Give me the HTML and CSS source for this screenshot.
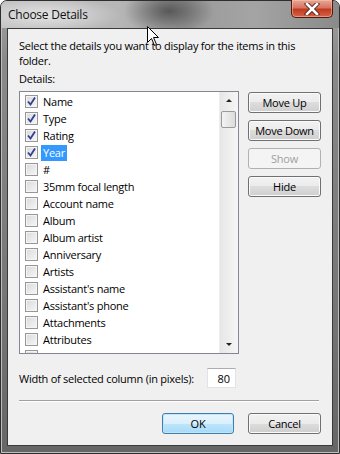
FILE: index.html
```html
<!DOCTYPE html>
<html lang="en">
<head>
    <meta charset="UTF-8">
    <meta name="viewport" content="width=device-width, initial-scale=1.0">
    <title>Choose Details</title>
    <link rel="stylesheet" href="styles.css">
</head>
<body>
    <div class="window">
        <div class="titlebar">
            <span class="title">Choose Details</span>
            <button class="close" title="Close">
                <svg width="16" height="12" viewBox="0 0 16 12">
                    <path d="M3 1 L13 11 M13 1 L3 11" stroke="#4a2218" stroke-width="4.4" stroke-linecap="square"/>
                    <path d="M3 1 L13 11 M13 1 L3 11" stroke="#fff" stroke-width="2.6" stroke-linecap="square"/>
                </svg>
            </button>
        </div>

        <div class="client">
            <p class="intro">Select the details you want to display for the items in this<br>folder.</p>
            <p class="field-label">Details:</p>

            <div class="middle">
                <div class="listbox">
                    <ul class="items">
                        <li><span class="check on"></span><span class="text">Name</span></li>
                        <li><span class="check on"></span><span class="text">Type</span></li>
                        <li><span class="check on"></span><span class="text">Rating</span></li>
                        <li><span class="check on"></span><span class="text selected">Year</span></li>
                        <li><span class="check"></span><span class="text">#</span></li>
                        <li><span class="check"></span><span class="text">35mm focal length</span></li>
                        <li><span class="check"></span><span class="text">Account name</span></li>
                        <li><span class="check"></span><span class="text">Album</span></li>
                        <li><span class="check"></span><span class="text">Album artist</span></li>
                        <li><span class="check"></span><span class="text">Anniversary</span></li>
                        <li><span class="check"></span><span class="text">Artists</span></li>
                        <li><span class="check"></span><span class="text">Assistant's name</span></li>
                        <li><span class="check"></span><span class="text">Assistant's phone</span></li>
                        <li><span class="check"></span><span class="text">Attachments</span></li>
                        <li><span class="check"></span><span class="text">Attributes</span></li>
                        <li><span class="check"></span></li>
                    </ul>
                    <div class="scrollbar">
                        <span class="arrow up"></span>
                        <span class="thumb"></span>
                        <span class="track"></span>
                        <span class="arrow down"></span>
                    </div>
                </div>

                <div class="side-buttons">
                    <button class="btn">Move Up</button>
                    <button class="btn">Move Down</button>
                    <button class="btn" disabled>Show</button>
                    <button class="btn">Hide</button>
                </div>
            </div>

            <div class="width-row">
                <label for="col-width">Width of selected column (in pixels):</label>
                <input type="text" id="col-width" value="80">
            </div>

            <hr class="separator">

            <div class="actions">
                <button class="btn default">OK</button>
                <button class="btn">Cancel</button>
            </div>
        </div>

        <svg class="cursor" width="13" height="21" viewBox="0 0 13 21">
            <path d="M0.5 0.5 L0.5 16.5 L4.5 12.5 L7.5 19.5 L9.5 18.5 L6.5 11.5 L11.5 11.5 Z" fill="#fff" stroke="#000" stroke-width="1"/>
        </svg>
    </div>
</body>
</html>
```

FILE: styles.css
```css
body {
    margin: 0;
    font-family: "Open Sans", "Liberation Sans", sans-serif;
    font-size: 11px;
    letter-spacing: -0.25px;
    color: #000;
    background: #fff;
}
.window {
    position: relative;
    width: 340px;
    height: 454px;
    box-sizing: border-box;
    border: 1px solid #2e2e2e;
    border-radius: 7px 7px 0 0;
    padding: 0 6px 7px 6px;
    background: linear-gradient(to bottom, #a3a3a3 0, #8a8a8a 60px, #767676 300px, #666 100%);
    box-shadow: inset 0 0 0 1px #bdbdbd;
}
.titlebar {
    display: flex;
    justify-content: space-between;
    align-items: flex-start;
    height: 27px;
    margin: 0 -6px;
    padding: 0 6px;
    border-radius: 6px 6px 0 0;
    background:
        radial-gradient(ellipse 45px 24px at 168px 10px, rgba(70, 70, 70, 0.8), rgba(70, 70, 70, 0) 100%),
        radial-gradient(ellipse 75px 18px at 45px 14px, rgba(232, 232, 232, 0.9), rgba(232, 232, 232, 0) 100%),
        linear-gradient(to right, #c0c0c0 0, #b6b6b6 35%, #9a9a9a 55%, #a4a4a4 75%, #8a8a8a 100%);
}
.title {
    padding: 6px 0 0 1px;
    font-size: 12px;
    line-height: 16px;
    color: #111;
}
.close {
    display: flex;
    align-items: center;
    justify-content: center;
    width: 42px;
    height: 18px;
    margin-top: -1px;
    padding: 0;
    border: 1px solid #4e1a10;
    border-top: none;
    border-radius: 0 0 5px 5px;
    background: linear-gradient(to bottom, #e9a797 0, #d7755f 45%, #c13a1f 55%, #d4634a 100%);
    box-shadow: inset 0 0 0 1px rgba(255, 200, 180, 0.5);
}
.client {
    height: 418px;
    box-sizing: border-box;
    border: 1px solid #3a3a3a;
    background: #f0f0f0;
    padding: 9px 11px 0 11px;
}
.intro, .field-label {
    margin: 0;
    line-height: 15px;
}
.field-label {
    margin: 3px 0 5px;
}
.middle {
    display: flex;
}
.listbox {
    display: flex;
    width: 220px;
    height: 263px;
    box-sizing: border-box;
    border: 1px solid #828790;
    background: #fff;
    overflow: hidden;
}
.items {
    flex: 1;
    list-style: none;
    margin: 0;
    padding: 1px 0 0 5px;
}
.items li {
    display: flex;
    align-items: center;
    height: 17px;
}
.check {
    width: 13px;
    height: 13px;
    box-sizing: border-box;
    border: 1px solid #979797;
    margin-right: 3px;
    background: linear-gradient(135deg, #d9d9d9, #f7f7f7);
    box-shadow: inset 0 0 0 1px #f4f4f4;
    flex-shrink: 0;
}
.check.on {
    background:
        url("data:image/svg+xml,%3Csvg xmlns='http://www.w3.org/2000/svg' width='11' height='11'%3E%3Cpath d='M2 5.5 L4.5 8.5 L9 1.5' fill='none' stroke='%23303f8e' stroke-width='1.8'/%3E%3C/svg%3E") center no-repeat,
        linear-gradient(135deg, #d9d9d9, #f7f7f7);
}
.text {
    padding: 0 2px;
    line-height: 16px;
    white-space: nowrap;
}
.text.selected {
    background: #3399ff;
    color: #fff;
}
.scrollbar {
    display: flex;
    flex-direction: column;
    width: 18px;
    background: linear-gradient(to right, #e6e6e6, #f6f6f6);
    border-left: 1px solid #ececec;
}
.arrow {
    height: 17px;
    display: flex;
    align-items: center;
    justify-content: center;
}
.arrow::after {
    content: "";
    border-left: 3px solid transparent;
    border-right: 3px solid transparent;
}
.arrow.up::after {
    border-bottom: 3px solid #222;
}
.arrow.down::after {
    border-top: 3px solid #222;
}
.thumb {
    height: 15px;
    margin: 2px 2px 0 1px;
    border: 1px solid #9a9a9a;
    border-radius: 2px;
    background: linear-gradient(to right, #f3f3f3, #dcdcdc);
}
.track {
    flex: 1;
}
.side-buttons {
    display: flex;
    flex-direction: column;
    gap: 7px;
    margin: 1px 0 0 9px;
}
.btn {
    width: 73px;
    height: 21px;
    padding: 0;
    font-family: inherit;
    font-size: 11px;
    letter-spacing: -0.25px;
    color: #000;
    border: 1px solid #707070;
    border-radius: 3px;
    background: linear-gradient(to bottom, #f2f2f2 0, #ebebeb 50%, #dddddd 50%, #cfcfcf 100%);
    box-shadow: inset 0 0 0 1px #fbfbfb;
}
.btn:disabled {
    color: #a0a0a0;
    border-color: #adb2b5;
    background: #f4f4f4;
    box-shadow: none;
}
.btn.default {
    width: 72px;
    border-color: #3c7fb1;
    background: linear-gradient(to bottom, #eaf6fd 0, #d9f0fc 50%, #bee6fd 50%, #a7d9f5 100%);
    box-shadow: inset 0 0 0 1px #c4e5f6;
}
.width-row {
    display: flex;
    align-items: center;
    margin-top: 14px;
    height: 20px;
}
.width-row label {
    width: 188px;
}
.width-row input {
    width: 29px;
    height: 20px;
    box-sizing: border-box;
    border: 1px solid #e2e3ea;
    border-top-color: #abadb3;
    padding: 0 5px 0 0;
    font-family: inherit;
    font-size: 11px;
    text-align: right;
    background: #fff;
}
.separator {
    width: 300px;
    margin: 12px 0 0;
    border: none;
    border-top: 1px solid #a0a0a0;
    border-bottom: 1px solid #fff;
}
.actions {
    display: flex;
    justify-content: flex-end;
    gap: 14px;
    margin-top: 11px;
}
.cursor {
    position: absolute;
    left: 146px;
    top: 25px;
}
```
